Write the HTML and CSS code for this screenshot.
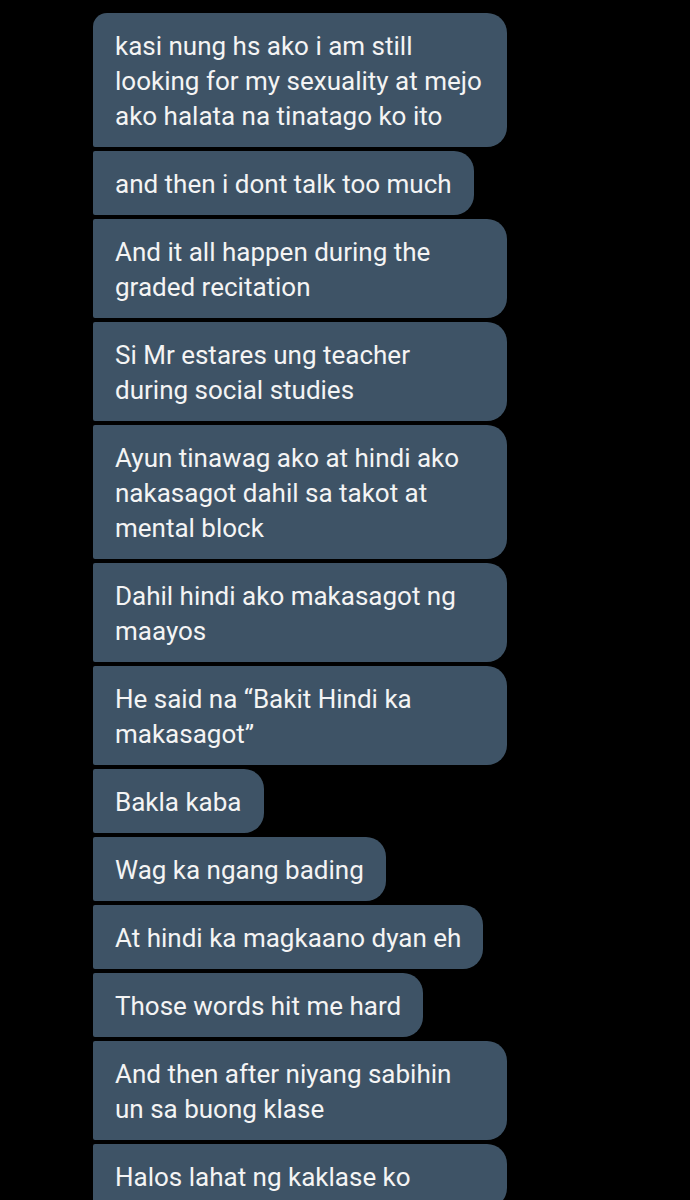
FILE: index.html
```html
<!DOCTYPE html>
<html lang="en">
<head>
  <meta charset="UTF-8">
  <title>Chat</title>
  <link rel="stylesheet" href="styles.css">
</head>
<body>
  <!-- Message thread -->
  <div class="thread">
    <div class="bubble first">kasi nung hs ako i am still looking for my sexuality at mejo ako halata na tinatago ko ito</div>
    <div class="bubble">and then i dont talk too much</div>
    <div class="bubble">And it all happen during the graded recitation</div>
    <div class="bubble">Si Mr estares ung teacher during social studies</div>
    <div class="bubble">Ayun tinawag ako at hindi ako nakasagot dahil sa takot at mental block</div>
    <div class="bubble">Dahil hindi ako makasagot ng maayos</div>
    <div class="bubble">He said na “Bakit Hindi ka makasagot”</div>
    <div class="bubble">Bakla kaba</div>
    <div class="bubble">Wag ka ngang bading</div>
    <div class="bubble">At hindi ka magkaano dyan eh</div>
    <div class="bubble">Those words hit me hard</div>
    <div class="bubble">And then after niyang sabihin un sa buong klase</div>
    <div class="bubble wide">Halos lahat ng kaklase ko</div>
  </div>
</body>
</html>
```

FILE: styles.css
```css
body {
  margin: 0;
  background: #000;
  font-family: Roboto, "Liberation Sans", sans-serif;
  height: 1200px;
  overflow: hidden;
}

.thread {
  display: flex;
  flex-direction: column;
  align-items: flex-start;
  gap: 4px;
  padding: 13px 0 0 93px;
}

.bubble {
  max-width: 370px;
  padding: 16px 22px 13px;
  background-color: #3e5366;
  color: #f4f4f4;
  font-size: 26px;
  line-height: 35px;
  border-radius: 2px 20px 20px 2px;
}

.bubble.first {
  border-top-left-radius: 14px;
}

/* message continues past the bottom of the screen */
.bubble.wide {
  width: 370px;
}
```
